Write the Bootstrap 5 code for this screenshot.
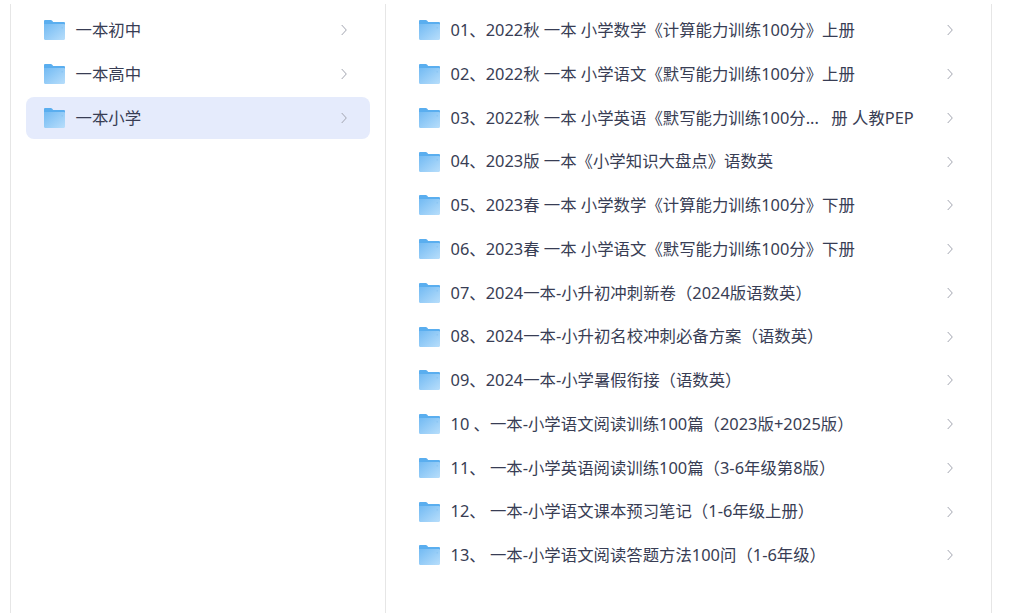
<!DOCTYPE html>
<html lang="zh">
<head>
<meta charset="utf-8">
<link href="https://cdn.jsdelivr.net/npm/bootstrap@5.3.0/dist/css/bootstrap.min.css" rel="stylesheet">
<style>
html,body{height:100%;overflow:hidden;background:#fff}
body{font-family:"Noto Sans","Noto Sans CJK SC",sans-serif;color:#383d54}
.shell{height:613px;padding:4px 28px 0 10px}
.pane{height:100%;border-left:1px solid #e6e6e6;padding-top:5.4px}
.pane-left{width:375px;padding-left:15px;padding-right:15px}
.pane-right{width:607px;padding-left:15px;padding-right:15px;border-right:1px solid #e6e6e6}
.entry{height:42px;margin-bottom:1.75px;padding:0 18px;border-radius:8px;font-size:16.4px;white-space:nowrap}
.entry-on{background:#e5ebfc}
.folder{width:21px;height:20px;flex:none;margin-right:10.5px}
.chev{width:6px;height:12px;flex:none;margin-right:5px}
.ttl{flex:1;min-width:0}
.gap-mid{margin-left:12.5px}
</style>
</head>
<body>
<svg width="0" height="0" class="d-block">
<defs>
<linearGradient id="fg" x1="0" y1="0" x2="1" y2="1"><stop offset="0" stop-color="#72baf3"/><stop offset="1" stop-color="#b8defb"/></linearGradient>
<symbol id="fold" viewBox="0 0 21 20">
<path d="M0 1.2C0 .5.5 0 1.2 0h5.600c.5 0 .9.2 1.200.6L9.200 2h10.600c.7 0 1.200.5 1.200 1.200V5H0z" fill="#5aaeef"/>
<path d="M0 4h19.800c.7 0 1.200.5 1.200 1.200v13.600c0 .7-.5 1.200-1.200 1.200H1.200C.5 20 0 19.500 0 18.800z" fill="url(#fg)"/>
<rect x="17.500" y="7" width="1.500" height="1.500" fill="#8cc6f4"/>
</symbol>
<symbol id="chv" viewBox="0 0 6 12"><path d="M.7 1l4.600 5-4.600 5" fill="none" stroke="#a2a5b0" stroke-width="1"/></symbol>
</defs>
</svg>
<div class="shell d-flex">
<div class="pane pane-left">
<div class="entry d-flex align-items-center"><svg class="folder"><use href="#fold"/></svg><span class="ttl">一本初中</span><svg class="chev"><use href="#chv"/></svg></div>
<div class="entry d-flex align-items-center"><svg class="folder"><use href="#fold"/></svg><span class="ttl">一本高中</span><svg class="chev"><use href="#chv"/></svg></div>
<div class="entry entry-on d-flex align-items-center"><svg class="folder"><use href="#fold"/></svg><span class="ttl">一本小学</span><svg class="chev"><use href="#chv"/></svg></div>
</div>
<div class="pane pane-right">
<div class="entry d-flex align-items-center"><svg class="folder"><use href="#fold"/></svg><span class="ttl">01、2022秋 一本 小学数学《计算能力训练100分》上册</span><svg class="chev"><use href="#chv"/></svg></div>
<div class="entry d-flex align-items-center"><svg class="folder"><use href="#fold"/></svg><span class="ttl">02、2022秋 一本 小学语文《默写能力训练100分》上册</span><svg class="chev"><use href="#chv"/></svg></div>
<div class="entry d-flex align-items-center"><svg class="folder"><use href="#fold"/></svg><span class="ttl">03、2022秋 一本 小学英语《默写能力训练100分...<span class="gap-mid">册 人教PEP</span></span><svg class="chev"><use href="#chv"/></svg></div>
<div class="entry d-flex align-items-center"><svg class="folder"><use href="#fold"/></svg><span class="ttl">04、2023版 一本《小学知识大盘点》语数英</span><svg class="chev"><use href="#chv"/></svg></div>
<div class="entry d-flex align-items-center"><svg class="folder"><use href="#fold"/></svg><span class="ttl">05、2023春 一本 小学数学《计算能力训练100分》下册</span><svg class="chev"><use href="#chv"/></svg></div>
<div class="entry d-flex align-items-center"><svg class="folder"><use href="#fold"/></svg><span class="ttl">06、2023春 一本 小学语文《默写能力训练100分》下册</span><svg class="chev"><use href="#chv"/></svg></div>
<div class="entry d-flex align-items-center"><svg class="folder"><use href="#fold"/></svg><span class="ttl">07、2024一本-小升初冲刺新卷（2024版语数英）</span><svg class="chev"><use href="#chv"/></svg></div>
<div class="entry d-flex align-items-center"><svg class="folder"><use href="#fold"/></svg><span class="ttl">08、2024一本-小升初名校冲刺必备方案（语数英）</span><svg class="chev"><use href="#chv"/></svg></div>
<div class="entry d-flex align-items-center"><svg class="folder"><use href="#fold"/></svg><span class="ttl">09、2024一本-小学暑假衔接（语数英）</span><svg class="chev"><use href="#chv"/></svg></div>
<div class="entry d-flex align-items-center"><svg class="folder"><use href="#fold"/></svg><span class="ttl">10 、一本-小学语文阅读训练100篇（2023版+2025版）</span><svg class="chev"><use href="#chv"/></svg></div>
<div class="entry d-flex align-items-center"><svg class="folder"><use href="#fold"/></svg><span class="ttl">11、 一本-小学英语阅读训练100篇（3-6年级第8版）</span><svg class="chev"><use href="#chv"/></svg></div>
<div class="entry d-flex align-items-center"><svg class="folder"><use href="#fold"/></svg><span class="ttl">12、 一本-小学语文课本预习笔记（1-6年级上册）</span><svg class="chev"><use href="#chv"/></svg></div>
<div class="entry d-flex align-items-center"><svg class="folder"><use href="#fold"/></svg><span class="ttl">13、 一本-小学语文阅读答题方法100问（1-6年级）</span><svg class="chev"><use href="#chv"/></svg></div>
</div>
</div>
</body>
</html>
